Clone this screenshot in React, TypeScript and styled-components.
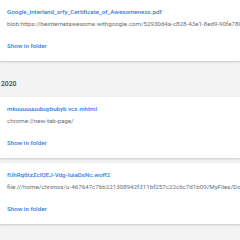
import React from 'react';
import styled, { createGlobalStyle } from 'styled-components';

const GlobalStyle = createGlobalStyle`
  html, body {
    margin: 0;
    padding: 0;
    background: #f3f3f4;
    font-family: Roboto, "Liberation Sans", sans-serif;
  }
`;

const Page = styled.div`
  width: 240px;
  height: 240px;
  overflow: hidden;
  display: flex;
  flex-direction: column;
`;

const DateHeader = styled.div`
  padding: 18px 1px 8px;
  font-size: 6.8px;
  line-height: 10px;
  font-weight: 500;
  color: #45484b;
`;

const Card = styled.div<{ gap?: number }>`
  background: #fff;
  box-shadow: 0 1px 2px rgba(60, 64, 67, 0.25);
  padding: 8px 7px 10px;
  margin-bottom: ${(p) => p.gap ?? 0}px;
  display: flex;
  flex-direction: column;
  white-space: nowrap;
  overflow: hidden;
`;

const FileName = styled.a`
  font-size: 6.2px;
  line-height: 9px;
  font-weight: 500;
  color: #2f7de6;
  text-decoration: none;
`;

const Url = styled.div`
  margin-top: 3px;
  font-size: 6.2px;
  line-height: 9px;
  color: #6a6e72;
`;

const FolderLink = styled.a`
  margin-top: 13px;
  font-size: 6.2px;
  line-height: 9px;
  font-weight: 500;
  color: #2f7de6;
  text-decoration: none;
`;

type Item = { name: string; url: string };

const DownloadCard: React.FC<{ item: Item; gap?: number }> = ({ item, gap }) => (
  <Card gap={gap}>
    <FileName href="#">{item.name}</FileName>
    <Url>{item.url}</Url>
    <FolderLink href="#">Show in folder</FolderLink>
  </Card>
);

export default function App() {
  return (
    <Page>
      <GlobalStyle />
      <DownloadCard
        item={{
          name: 'Google_Interland_srfy_Certificate_of_Awesomeness.pdf',
          url: 'blob:https://beinternetawesome.withgoogle.com/52930d4a-c828-43e1-8ed9-90fe78006b1c',
        }}
      />
      <DateHeader>2020</DateHeader>
      <DownloadCard
        gap={5}
        item={{ name: 'mkuuuuuuubuybubyb vcz.mhtml', url: 'chrome://new-tab-page/' }}
      />
      <DownloadCard
        item={{
          name: 'fUhRq6tzZcIQEJ-Vdg-IuiaDsNc.woff2',
          url: 'file:///home/chronos/u-467647c76b221308942f311bf257c22c6c7d1b09/MyFiles/Downloads',
        }}
      />
    </Page>
  );
}
